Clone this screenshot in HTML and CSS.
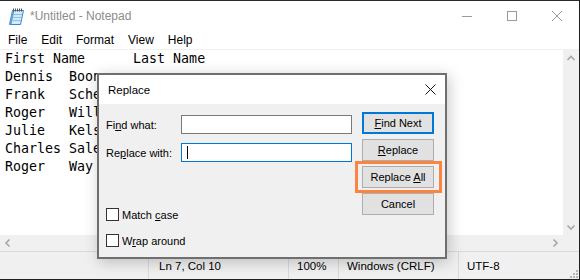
FILE: index.html
```html
<!DOCTYPE html>
<html>
<head>
<meta charset="utf-8">
<title>Notepad</title>
<link rel="stylesheet" href="styles.css">
</head>
<body>
<div class="window">
  <div class="titlebar">
    <svg class="app-icon" width="16" height="17" viewBox="0 0 16 17">
      <polygon points="4.5,2.5 15.5,2.5 12.5,16.5 1.5,16.5" fill="#d2ebfa" stroke="#3f86c9" stroke-width="1"/>
      <polygon points="4.5,2.5 6.5,2.5 3.5,16.5 1.5,16.5" fill="#5aa2dd"/>
      <line x1="6" y1="6.5" x2="14" y2="6.5" stroke="#8fbde3"/>
      <line x1="5.3" y1="9.5" x2="13.3" y2="9.5" stroke="#8fbde3"/>
      <line x1="4.6" y1="12.5" x2="12.6" y2="12.5" stroke="#8fbde3"/>
      <g fill="#555">
        <rect x="5" y="0.5" width="1" height="3"/>
        <rect x="7" y="0.5" width="1" height="3"/>
        <rect x="9" y="0.5" width="1" height="3"/>
        <rect x="11" y="0.5" width="1" height="3"/>
        <rect x="13" y="0.5" width="1" height="3"/>
      </g>
    </svg>
    <span class="title">*Untitled - Notepad</span>
    <div class="caption-btns">
      <div class="cap"><svg width="10" height="10" viewBox="0 0 10 10"><line x1="0" y1="5.5" x2="10" y2="5.5"/></svg></div>
      <div class="cap"><svg width="10" height="10" viewBox="0 0 10 10"><rect x="0.5" y="0.5" width="9" height="9"/></svg></div>
      <div class="cap"><svg width="10" height="10" viewBox="0 0 10 10"><path d="M0 0 L10 10 M10 0 L0 10"/></svg></div>
    </div>
  </div>
  <div class="menubar">
    <span>File</span><span>Edit</span><span>Format</span><span>View</span><span>Help</span>
  </div>
  <div class="client">
    <div class="edit-row">
<pre class="editor">First Name      Last Name
Dennis  Boone
Frank   Schembri
Roger   Williams
Julie   Kelso
Charles Salem
Roger   Way</pre>
      <div class="vscroll">
        <svg class="arrow" width="16" height="16" viewBox="0 0 16 16"><path d="M4.5 10 L8 6.5 L11.5 10"/></svg>
        <svg class="arrow" width="16" height="16" viewBox="0 0 16 16"><path d="M4.5 6.5 L8 10 L11.5 6.5"/></svg>
      </div>
    </div>
    <div class="hscroll-row">
      <div class="hscroll">
        <svg class="arrow" width="16" height="16" viewBox="0 0 16 16"><path d="M9.5 4.5 L6 8 L9.5 11.5"/></svg>
        <svg class="arrow" width="16" height="16" viewBox="0 0 16 16"><path d="M6.5 4.5 L10 8 L6.5 11.5"/></svg>
      </div>
      <div class="corner"></div>
    </div>
  </div>
  <div class="statusbar">
    <div class="sb-cell sb-blank"></div>
    <div class="sb-cell sb-pos">Ln 7, Col 10</div>
    <div class="sb-cell sb-zoom">100%</div>
    <div class="sb-cell sb-eol">Windows (CRLF)</div>
    <div class="sb-cell sb-enc">UTF-8</div>
    <svg class="grip" width="8" height="8" viewBox="0 0 8 8">
      <g fill="#b5b5b5">
        <rect x="6" y="0" width="2" height="2"/>
        <rect x="3" y="3" width="2" height="2"/><rect x="6" y="3" width="2" height="2"/>
        <rect x="0" y="6" width="2" height="2"/><rect x="3" y="6" width="2" height="2"/><rect x="6" y="6" width="2" height="2"/>
      </g>
    </svg>
  </div>

  <div class="dialog">
    <div class="dlg-title">
      <span class="dlg-caption">Replace</span>
      <div class="dlg-close"><svg width="11" height="11" viewBox="0 0 11 11"><path d="M0.5 0.5 L10.5 10.5 M10.5 0.5 L0.5 10.5"/></svg></div>
    </div>
    <div class="dlg-body">
      <div class="dlg-left">
        <div class="field">
          <span class="label">Fi<u>n</u>d what:</span>
          <div class="input"></div>
        </div>
        <div class="field field-second">
          <span class="label">Re<u>p</u>lace with:</span>
          <div class="input input-focus"><span class="caret"></span></div>
        </div>
        <div class="checks">
          <div class="check"><span class="box"></span><span>Match <u>c</u>ase</span></div>
          <div class="check"><span class="box"></span><span>W<u>r</u>ap around</span></div>
        </div>
      </div>
      <div class="dlg-btns">
        <div class="btn btn-default"><span><u>F</u>ind Next</span></div>
        <div class="btn"><span><u>R</u>eplace</span></div>
        <div class="btn btn-hl"><span>Replace <u>A</u>ll</span></div>
        <div class="btn"><span>Cancel</span></div>
      </div>
    </div>
  </div>
</div>
</body>
</html>
```
FILE: styles.css
```css
* { box-sizing: border-box; margin: 0; padding: 0; }
body { margin: 0; background: #fff; font-family: "Liberation Sans", Arial, sans-serif; color: #000; }

.window {
  width: 580px; height: 280px;
  display: flex; flex-direction: column;
  background: #fff;
  border-top: 1px solid #2b2b2b;
  border-right: 1px solid #1f1f1f;
  border-bottom: 1px solid #1f1f1f;
  position: relative; overflow: hidden;
}

.titlebar { height: 29px; flex: none; display: flex; align-items: center; padding-left: 8px; }
.app-icon { margin-right: 6px; margin-top: 1px; }
.title { font-size: 12px; color: #8c8c8c; flex: 1; }
.caption-btns { display: flex; align-self: stretch; }
.cap { width: 45px; display: flex; align-items: center; justify-content: center; }
.cap svg { stroke: #9a9a9a; fill: none; stroke-width: 1; }

.menubar {
  height: 20px; flex: none; display: flex; align-items: center;
  font-size: 12px; border-bottom: 1px solid #f0f0f0; padding-left: 1px;
}
.menubar span { padding: 0 7px; }

.client { flex: 1; display: flex; flex-direction: column; min-height: 0; }
.edit-row { flex: 1; display: flex; min-height: 0; }
.editor {
  flex: 1; font-family: "DejaVu Sans Mono", monospace; font-size: 13.3px;
  line-height: 18px; padding-left: 5px; overflow: hidden; white-space: pre;
}
.vscroll { width: 16px; background: #f0f0f0; display: flex; flex-direction: column; justify-content: space-between; }
.arrow path { fill: none; stroke: #a6a6a6; stroke-width: 1.6; }
.hscroll-row { height: 16px; flex: none; display: flex; }
.hscroll { flex: 1; background: #f0f0f0; display: flex; justify-content: space-between; align-items: center; }
.corner { width: 16px; background: #f0f0f0; }

.statusbar {
  height: 28px; flex: none; background: #f0f0f0; border-top: 1px solid #dadada;
  display: flex; font-size: 11.5px; position: relative;
}
.sb-cell { display: flex; align-items: center; padding-left: 8px; border-left: 1px solid #d9d9d9; }
.sb-blank { width: 148px; border-left: none; }
.sb-pos { width: 140px; padding-left: 10px; }
.sb-zoom { width: 50px; }
.sb-eol { width: 120px; }
.sb-enc { flex: 1; }
.grip { position: absolute; right: 1px; bottom: 1px; }

/* Dialog */
.dialog {
  position: absolute; left: 97px; top: 72px; width: 350px; height: 186px;
  border: 2px solid #6f6f6f; background: #f0f0f0;
  box-shadow: 2px 3px 14px rgba(0,0,0,0.22);
  display: flex; flex-direction: column;
  font-size: 11px;
}
.dlg-title { height: 29px; background: #fff; display: flex; align-items: center; padding-left: 9px; flex: none; }
.dlg-caption { flex: 1; font-size: 11.5px; }
.dlg-close { width: 30px; display: flex; justify-content: center; }
.dlg-close svg path { stroke: #111; stroke-width: 1; fill: none; }

.dlg-body { flex: 1; display: flex; padding: 8px 0 0 7px; gap: 10px; }
.dlg-left { display: flex; flex-direction: column; width: 246px; }
.field { display: flex; align-items: center; height: 19px; margin-top: 3px; }
.field-second { margin-top: 9px; }
.label { width: 75px; }
.input { width: 171px; height: 19px; background: #fff; border: 1px solid #7a7a7a; padding: 2px 0 0 5px; }
.input-focus { border-color: #0078d7; }
.caret { display: block; width: 1px; height: 13px; background: #000; }

.checks { margin-top: 46px; display: flex; flex-direction: column; gap: 13px; }
.check { display: flex; align-items: center; gap: 3px; height: 13px; }
.box { width: 13px; height: 13px; background: #fff; border: 1px solid #333; }

.dlg-btns { display: flex; flex-direction: column; gap: 5px; }
.btn {
  width: 72px; height: 22px; background: #e1e1e1; border: 1px solid #adadad;
  display: flex; align-items: center; justify-content: center; position: relative;
}
.btn-default { border: 2px solid #0078d7; }
.btn-hl::after {
  content: ""; position: absolute; left: -8px; right: -9px; top: -6px; bottom: -6px;
  border: 3px solid #f98540;
}
u { text-underline-offset: 1px; }
```
